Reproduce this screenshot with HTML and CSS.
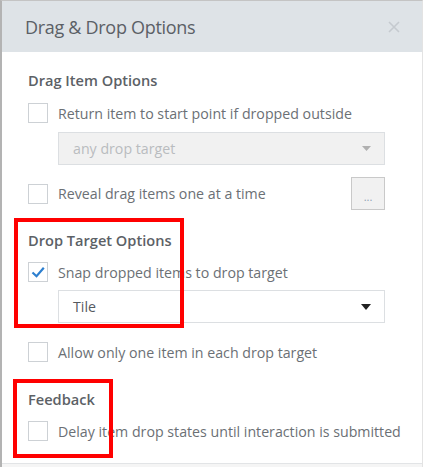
FILE: index.html
```html
<!DOCTYPE html>
<html>
<head>
<meta charset="utf-8">
<link rel="stylesheet" href="styles.css">
</head>
<body>
<div class="dialog">
  <div class="header">
    <span class="title">Drag &amp; Drop Options</span>
    <svg class="close" width="12" height="12" viewBox="0 0 12 12"><path d="M1 1L11 11M11 1L1 11" stroke="#c5cacf" stroke-width="1.6"/></svg>
  </div>
  <div class="content">
    <div class="heading h1">Drag Item Options</div>
    <div class="row r1"><span class="cb"></span><span class="label">Return item to start point if dropped outside</span></div>
    <div class="select disabled"><span>any drop target</span><svg width="9" height="5" viewBox="0 0 9 5"><path d="M0 0H9L4.5 5Z" fill="#b0b0b0"/></svg></div>
    <div class="row r2"><span class="cb"></span><span class="label">Reveal drag items one at a time</span><span class="spacer"></span><span class="btn">...</span></div>
    <div class="heading h2">Drop Target Options</div>
    <div class="row r3"><span class="cb checked"><svg width="14" height="12" viewBox="0 0 14 12"><path d="M1.5 6.5L5.5 10.2L12.8 1.8" fill="none" stroke="#2d7fcf" stroke-width="2.2"/></svg></span><span class="label">Snap dropped items to drop target</span></div>
    <div class="select"><span>Tile</span><svg width="10" height="6" viewBox="0 0 10 6"><path d="M0 0H10L5 6Z" fill="#222"/></svg></div>
    <div class="row r4"><span class="cb"></span><span class="label">Allow only one item in each drop target</span></div>
    <div class="heading h3">Feedback</div>
    <div class="row r5"><span class="cb"></span><span class="label">Delay item drop states until interaction is submitted</span></div>
  </div>
  <div class="footer"></div>
  <div class="mark m1"></div>
  <div class="mark m2"></div>
</div>
</body>
</html>
```
FILE: styles.css
```css
html, body {
  margin: 0;
  padding: 0;
  background: #ffffff;
}
body {
  font-family: "Open Sans", "Noto Sans", sans-serif;
  color: #666b70;
  width: 423px;
  height: 467px;
  overflow: hidden;
}
.dialog {
  position: relative;
  box-sizing: border-box;
  width: 423px;
  height: 467px;
  border-left: 2px solid #b3b3b3;
  border-top: 1px solid #c4c4c4;
  border-right: 1px solid #e3e3e3;
  display: flex;
  flex-direction: column;
}
.header {
  height: 51px;
  background: #dee3e7;
  display: flex;
  align-items: center;
  justify-content: space-between;
  padding: 0 22px 0 23px;
  flex-shrink: 0;
}
.title {
  font-size: 18px;
  color: #5b6066;
  letter-spacing: -0.3px;
}
.content {
  padding: 18px 37px 0 26px;
  display: flex;
  flex-direction: column;
  flex: 1;
}
.heading {
  font-size: 14.6px;
  font-weight: 600;
  color: #5c6166;
  height: 20px;
  line-height: 20px;
}
.row {
  display: flex;
  align-items: center;
  min-height: 20px;
}
.cb {
  box-sizing: border-box;
  width: 20px;
  height: 20px;
  border: 1px solid #cdd1d5;
  background: #fff;
  flex-shrink: 0;
  display: flex;
  align-items: center;
  justify-content: center;
}
.label {
  margin-left: 10px;
  font-size: 14.2px;
  color: #6b7075;
  white-space: nowrap;
}
.spacer { flex: 1; }
.btn {
  box-sizing: border-box;
  width: 34px;
  height: 33px;
  border: 1px solid #c9c9c9;
  background: #f1f1f1;
  display: flex;
  align-items: center;
  justify-content: center;
  color: #8ea0b5;
  font-size: 11px;
  padding-top: 5px;
}
.select {
  box-sizing: border-box;
  margin-left: 30px;
  height: 33px;
  border: 1px solid #dcdfe2;
  background: #fff;
  display: flex;
  align-items: center;
  justify-content: space-between;
  padding: 0 13px 0 14px;
  font-size: 14.2px;
  color: #555a5f;
}
.select.disabled {
  background: #f1f1f1;
  color: #b9bcbf;
}
.h1 { margin-top: 0; }
.r1 { margin-top: 13px; }
.select.disabled { margin-top: 9px; }
.r2 { margin-top: 12px; }
.h2 { margin-top: 20px; }
.r3 { margin-top: 12px; }
.r3 + .select { margin-top: 8px; }
.r4 { margin-top: 19px; }
.h3 { margin-top: 27px; }
.r5 { margin-top: 12px; }
.footer {
  height: 3px;
  border-top: 1px solid #e2e4e6;
  background: #f5f5f5;
}
.mark {
  position: absolute;
  border: 4px solid #ff0000;
  box-sizing: border-box;
}
.m1 { left: 12px; top: 217px; width: 170px; height: 110px; }
.m2 { left: 11px; top: 378px; width: 100px; height: 79px; }
```
